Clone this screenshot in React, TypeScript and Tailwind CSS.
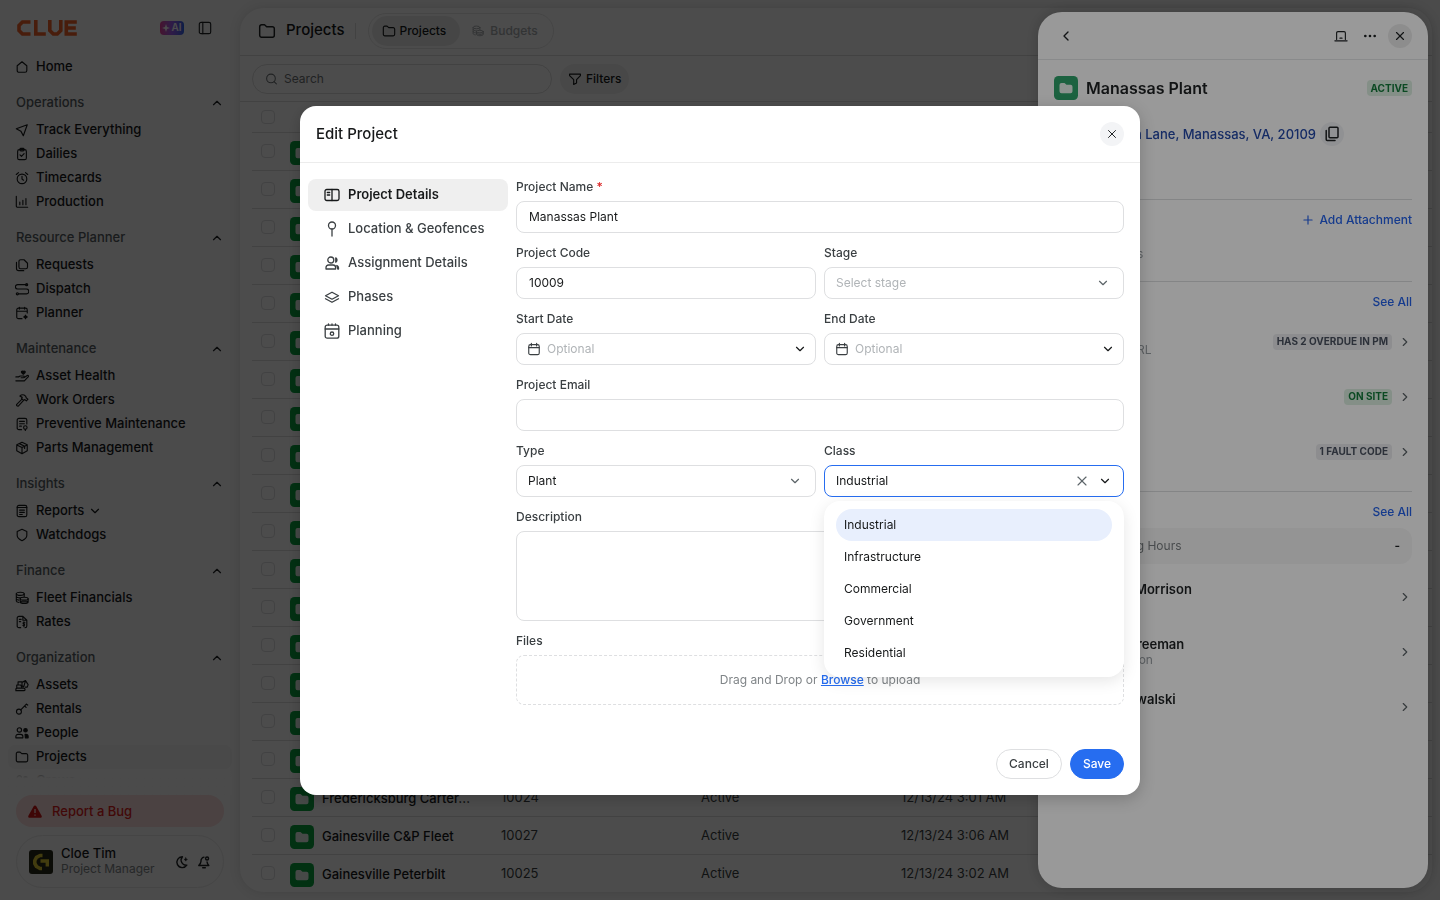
import React from 'react';
import { ChevronDown, ChevronLeft, ChevronRight, ChevronUp, Ellipsis, Plus, Search, X } from 'lucide-react';

const ICONS: Record<string, React.ReactNode> = {
    home: <path d="M2.5 6.6 8 2l5.500 4.600V12a2 2 0 0 1-2 2h-7a2 2 0 0 1-2-2z" />,
    send: <path d="M14 2 1.500 6.500l5.200 2.800L9.500 14.500z" />,
    clipboard: <><rect x="3" y="3" width="10" height="11.500" rx="2" /><rect x="5.700" y="1.500" width="4.600" height="3" rx="1" /><path d="m5.700 9 1.700 1.700 3-3.200" /></>,
    alarm: <><circle cx="8" cy="9" r="5.500" /><path d="M8 6v3.200l1.800 1.300M1.500 4 4 1.800M14.500 4 12 1.800" /></>,
    chart: <path d="M1.500 1.500v11a1.500 1.500 0 0 0 1.500 1.500h11.500M5.500 8v3M9 6v5M12.500 4v7" />,
    files: <><path d="M6.500 2h3.800L14.300 6v4.300a2 2 0 0 1-2 2H6.500a2 2 0 0 1-2-2V4a2 2 0 0 1 2-2z" /><path d="M1.700 5v7a2.500 2.500 0 0 0 2.500 2.500H10" /></>,
    route: <><path d="M3.500 3H13M3 3a2.500 2.500 0 0 0 0 5h10a2.500 2.500 0 0 1 0 5.500H4" /><circle cx="13.300" cy="3" r="1.200" /><circle cx="2.700" cy="13.500" r="1.200" /></>,
    planner: <><path d="M8 14.500H4a2 2 0 0 1-2-2V4.500a2 2 0 0 1 2-2h8a2 2 0 0 1 2 2V8M2 6h12M5 1.500v2M11 1.500v2" /><path d="m12 10.500.7 1.300 1.300.7-1.300.7-.7 1.300-.7-1.300-1.300-.7 1.300-.7z" fill="currentColor" /></>,
    health: <><path d="M1 9h3l2-1h3.500c1.500 0 1.500 2 0 2H7M10.500 9.700 14 7.500c1.300-.5 2 .7 1 1.600l-4.300 4.400H1" /><path d="M9.500 6 7.500 4c-.8-1.300 1.200-2.300 2-1 .8-1.300 2.800-.3 2 1z" fill="currentColor" /></>,
    hammer: <path d="m8 7-6 6c-.8 1.200 1 2.700 2 1.600L9.800 8.500M5.500 3.500C7.500 1.500 10 1.500 12 3.500l1 2.300 1.800 1.200-1.800 2-2-1.500-1.200 1L7.500 6.200l.8-1.200z" />,
    report: <><rect x="2.500" y="1.500" width="11" height="13" rx="2" /><path d="M2.500 4h11M5.300 7h5.400M5.300 9.500h5.400M5.300 12h3" /></>,
    maintenance: <><path d="M7.500 14.500h-3a2 2 0 0 1-2-2v-9a2 2 0 0 1 2-2h7a2 2 0 0 1 2 2V8M5.300 5h5.400M5.300 7.700h5.400M5.300 10.500h2" /><circle cx="11.800" cy="12" r="2" /><path d="M11.800 14v1.500" /></>,
    box: <path d="m8 1.500 6 2.700v7L8 14.500l-6-3.300v-7zM2 4.500l6 3 6-3M8 7.500v7M5 3l6 3v2.500" />,
    shield: <path d="M8 1.500 13.500 4v4.500c0 2.500-2.500 4.500-5.500 6-3-1.500-5.500-3.500-5.500-6V4z" />,
    coins: <><ellipse cx="6" cy="3.200" rx="4.500" ry="1.800" /><path d="M1.500 3.200v8.300c0 .8 1.200 1.400 3 1.700M1.500 6c0 1 2 1.800 4.500 1.800M1.500 8.800c0 .8 1 1.300 3 1.600M10.500 3.200v3" /><ellipse cx="10.500" cy="8.800" rx="4.500" ry="1.700" /><path d="M6 8.800v3.700c0 1 2 1.800 4.500 1.800s4.500-.8 4.500-1.800V8.800M6 11c0 .8 2 1.500 4.500 1.500S15 11.800 15 11" /></>,
    rates: <><path d="M6.500 14.500H4.500a2 2 0 0 1-2-2v-9a2 2 0 0 1 2-2H9L13.500 6v6.500a2 2 0 0 1-2 2M9 1.500V6h4.500M5 5h2M5 7.500h1.500" /><path d="M11.300 8.800c-1.700-.8-3 .7-1.300 1.500s1 2.200-1 1.500M10.200 7.800v5.500" /></>,
    excavator: <path d="M1 14.500h9a1.500 1.500 0 0 0 0-3H2.500a1.500 1.500 0 0 0-1.500 1.500zM2 11.500V8h4.500l1.500 3M3.500 8V4.500H8V9l2 1 2-7 3 4.500-1 3h-2M8 5l4-2" />,
    key: <><circle cx="4.500" cy="11" r="2.800" /><path d="m6.600 9 6.400-6.500M11 4.500l1.700 1.700M13 2.500l1.500 1" /></>,
    people: <><circle cx="5" cy="4.500" r="2.500" /><path d="M1 13.500v-1.500a2.500 2.500 0 0 1 2.500-2.500h3A2.500 2.500 0 0 1 9 12v1.500z" /><circle cx="12" cy="4.800" r="2" fill="currentColor" /><path d="M11.500 9.500h1A2.500 2.500 0 0 1 15 12v1.500h-3.200z" fill="currentColor" /></>,
    folder: <path d="M1.500 4.200a1.700 1.700 0 0 1 1.700-1.700h2.600l1.900 1.700h5.100a1.700 1.700 0 0 1 1.700 1.700v5.900a1.700 1.700 0 0 1-1.700 1.700H3.200a1.700 1.700 0 0 1-1.700-1.700z" />,
    panel: <><rect x="1.500" y="1.500" width="13" height="13" rx="2" /><path d="M5.500 1.500v13" /></>,
    funnel: <path d="M1.800 2.500h12.400v1.600L9.800 8.700v4L6.500 14.300V8.700L1.800 4.100z" />,
    details: <><rect x="1" y="2.500" width="14" height="11" rx="1.800" /><path d="M8 2.500v11M3.300 5.500h2.400M3.300 8h2.400" /></>,
    pin: <><circle cx="8" cy="4.500" r="3.500" /><path d="M8 8v7" /></>,
    team: <><circle cx="6.800" cy="5" r="3" /><path d="M2 14v-1.500a2.500 2.500 0 0 1 2.500-2.500h4.600a2.500 2.500 0 0 1 2.500 2.500V14z" /><path d="M11.800 2.800a2.600 2.600 0 0 1 0 4.400zM12.800 10.500a2.500 2.500 0 0 1 1.700 2.300V14h-.7z" fill="currentColor" /></>,
    layers: <><path d="M8 3.200 1.500 6.700 8 10.200l6.500-3.500z" /><path d="M1.500 9.800 8 13.300l6.500-3.500" /></>,
    calendar: <><rect x="2" y="3" width="12" height="11.500" rx="2" /><path d="M2 6.500h12M5 1.500v3M11 1.500v3" /></>,
    planning: <><rect x="1.200" y="2.200" width="13.600" height="13" rx="2" /><path d="M1.200 6h13.600M4.500 1v1.200M8 1v1.200M11.500 1v1.200" /><circle cx="8" cy="10.700" r="1.700" /></>,
    laptop: <path d="M3 12V4.500A1.500 1.500 0 0 1 4.500 3h7A1.500 1.500 0 0 1 13 4.500V12M1 13.500h14M6.800 10.500h2.400" />,
    copy: <><rect x="5" y="1.200" width="9" height="10.500" rx="1" /><path d="M2.200 4.500v9a1 1 0 0 0 1 1H11" /></>,
    moon: <><path d="M8.500 2a6.200 6.200 0 1 0 5 9.600A5.800 5.800 0 0 1 8.500 2z" /><path d="m12.300 3.200.6 1.300 1.300.6-1.300.6-.6 1.300-.6-1.300-1.300-.6 1.300-.6z" fill="currentColor" strokeWidth="0.600" /></>,
    bell: <><path d="M8 2.500C5.500 3 4.500 5 4.500 7.500c0 2-1 3-2.500 4.500h11.500c-1-1-1.800-2-2-4M6.500 14.500h3" /><circle cx="11.500" cy="4" r="1.700" /></>,
};

interface IconProps {
    name: string;
    className?: string;
    weight?: number;
}

const Icon: React.FC<IconProps> = ({ name, className = 'size-3.5', weight = 1.3 }) => (
    <svg
        viewBox="0 0 16 16"
        fill="none"
        stroke="currentColor"
        strokeWidth={weight}
        strokeLinecap="round"
        strokeLinejoin="round"
        className={`shrink-0 ${className}`}
        aria-hidden="true"
    >
        {ICONS[name]}
    </svg>
);

const sections = [
    { title: 'Operations', items: [['send', 'Track Everything'], ['clipboard', 'Dailies'], ['alarm', 'Timecards'], ['chart', 'Production']] },
    { title: 'Resource Planner', items: [['files', 'Requests'], ['route', 'Dispatch'], ['planner', 'Planner']] },
    { title: 'Maintenance', items: [['health', 'Asset Health'], ['hammer', 'Work Orders'], ['maintenance', 'Preventive Maintenance'], ['box', 'Parts Management']] },
    { title: 'Insights', items: [['report', 'Reports'], ['shield', 'Watchdogs']] },
    { title: 'Finance', items: [['coins', 'Fleet Financials'], ['rates', 'Rates']] },
    { title: 'Organization', items: [['excavator', 'Assets'], ['key', 'Rentals'], ['people', 'People'], ['folder', 'Projects'], ['people', 'Crews']] },
];

const NavItem = ({ icon, label }: { icon: string; label: string }) => (
    <a
        href="#"
        className={`flex h-6 items-center gap-2 rounded-lg px-2 text-[13px] font-medium text-[#17191a] ${label === 'Projects' ? 'bg-[#f3f3f3]' : ''}`}
    >
        <Icon name={icon} className="-ml-px size-3.5" />
        <span className="-ml-px">{label}</span>
        {label === 'Reports' && <ChevronDown size={14} className="-ml-1" />}
    </a>
);

const Sidebar = () => (
    <aside className="flex w-60 shrink-0 flex-col px-2 pb-3">
        <div className="flex h-[55px] shrink-0 items-center px-2">
            <svg viewBox="0 0 60 16" className="ml-px h-4 w-[60px]" fill="none" stroke="#f2622a" strokeWidth="3.600" role="img" aria-label="CLUE">
                <path d="M13.500 2H5.500L2 5.500v5L5.500 14h8M18.800 0v14h10M32.800 0v10.500l3.500 3.500h4l3.500-3.500V0M59.800 2H49.300v12h10.500M49.300 8h9.500" />
            </svg>
            <button type="button" className="mr-3.5 ml-auto flex h-3.5 w-6 items-center justify-center rounded bg-linear-to-r from-[#e83e9c] via-[#9a5bf0] to-[#2563eb] text-[10px] font-semibold text-white">
                <svg viewBox="0 0 8 8" className="mr-px size-2" fill="currentColor" aria-hidden="true"><path d="m4 0 1 3 3 1-3 1-1 3-1-3-3-1 3-1z" /></svg>
                AI
            </button>
            <button type="button" aria-label="Collapse sidebar" className="mr-3">
                <Icon name="panel" className="size-3.5" />
            </button>
        </div>
        <nav className="h-0 min-h-0 grow overflow-hidden">
            <NavItem icon="home" label="Home" />
            {sections.map((section) => (
                <div key={section.title}>
                    <button type="button" className="mt-3 mb-[3px] flex h-6 w-full items-center justify-between px-2 text-[13px] font-medium text-[#555d61]">
                        {section.title}
                        <ChevronUp size={14} className="text-[#1f2224]" />
                    </button>
                    {section.items.map(([icon, label]) => (
                        <NavItem key={label} icon={icon} label={label} />
                    ))}
                </div>
            ))}
        </nav>
        <div className="z-0 -mt-3 h-7 shrink-0 bg-linear-to-t from-[#fafafa] from-60% to-transparent" />
        <div className="flex shrink-0 flex-col gap-2 px-2">
            <button type="button" className="flex h-8 items-center gap-2.5 rounded-full bg-[#fbdcdc] px-3 pt-px text-[13px] font-medium text-[#dc1c1c]">
                <svg viewBox="0 0 14 13" className="h-[13px] w-3.5" aria-hidden="true">
                    <path d="M7 .5c.6 0 1 .3 1.300.8l5.300 9.400c.6 1-.1 2-1.200 2H1.600c-1.100 0-1.800-1-1.200-2L5.700 1.300C6 .8 6.400.5 7 .5z" fill="#d01616" />
                    <path d="M7 4v4M7 9.500v1.200" stroke="#fbdcdc" strokeWidth="1.300" />
                </svg>
                Report a Bug
            </button>
            <div className="flex h-[53px] items-center rounded-full border border-[#e8e8e8] px-3">
                <svg viewBox="0 0 24 24" className="size-6" role="img" aria-label="Company logo">
                    <rect width="24" height="24" rx="3" fill="#26281a" />
                    <path d="M13.500 5.500H11L7.500 7.300 5.800 10.500v3l1.700 3L11 18.500h2" fill="none" stroke="#dcc832" strokeWidth="3.600" strokeLinejoin="round" />
                    <path d="M11.500 11h6.800v5.500" fill="none" stroke="#dcc832" strokeWidth="3.400" />
                </svg>
                <div className="ml-2 flex flex-col pb-0.5">
                    <span className="text-[13px] leading-4 font-medium text-[#17191a]">Cloe Tim</span>
                    <span className="text-xs leading-4 text-[#808588]">Project Manager</span>
                </div>
                <button type="button" aria-label="Dark mode" className="ml-auto"><Icon name="moon" weight={1.6} /></button>
                <button type="button" aria-label="Notifications" className="ml-2"><Icon name="bell" weight={1.6} /></button>
            </div>
        </div>
    </aside>
);

const FolderBadge = ({ fill = '#08a33f' }: { fill?: string }) => (
    <svg viewBox="0 0 24 24" className="size-6 shrink-0" aria-hidden="true">
        <rect width="24" height="24" rx="4.500" fill={fill} />
        <path d="M5.500 9a2 2 0 0 1 2-2h3l2 1.700h4a2 2 0 0 1 2 2v4.600a2 2 0 0 1-2 2h-9a2 2 0 0 1-2-2z" fill="#e9f5ee" />
    </svg>
);

const projects = [
    ...Array.from({ length: 17 }, (_, i) => ['Culpeper Yard', String(10005 + i), '12/13/24 3:00 AM']),
    ['Fredericksburg Carter…', '10024', '12/13/24 3:01 AM'],
    ['Gainesville C&P Fleet', '10027', '12/13/24 3:06 AM'],
    ['Gainesville Peterbilt', '10025', '12/13/24 3:02 AM'],
];

const Checkbox = ({ label }: { label: string }) => (
    <input type="checkbox" aria-label={label} className="ml-[9px] block size-3.5 appearance-none rounded border border-[#dcdee0]" />
);

const ProjectsPage = () => (
    <main className="my-2 mr-2 flex min-w-0 grow flex-col overflow-hidden rounded-3xl bg-white shadow-[0_0_12px_rgba(0,0,0,0.12)]">
        <header className="flex h-12 shrink-0 items-center border-b border-[#dcdcdc] px-[18px] pb-0.5">
            <Icon name="folder" className="size-[18px]" />
            <h1 className="ml-2.5 text-[15px] font-medium text-[#17191a]">Projects</h1>
            <div className="ml-2.5 h-4 w-px bg-[#dcdcdc]" />
            <div className="ml-3 flex h-9 items-center rounded-full border border-[#e6e6e6] px-[3px]">
                <button type="button" className="flex h-[30px] items-center gap-1 rounded-full bg-[#ececec] pr-3.5 pl-2.5 text-xs font-medium text-[#17191a]">
                    <Icon name="folder" /> Projects
                </button>
                <button type="button" className="flex h-[30px] items-center gap-1.5 rounded-full px-3 text-xs font-medium text-[#a9adb0]">
                    <Icon name="coins" className="size-3" /> Budgets
                </button>
            </div>
        </header>
        <div className="flex h-[46px] shrink-0 items-center gap-2 border-b border-[#dcdcdc] px-3">
            <label className="flex h-[30px] w-[300px] items-center gap-1.5 rounded-full border border-[#dcdcdc] px-3 text-[#6e7376]">
                <Search size={14} />
                <input type="search" placeholder="Search" aria-label="Search" className="w-full min-w-0 bg-transparent pt-px text-xs outline-none placeholder:text-[#6e7376]" />
            </label>
            <button type="button" className="flex h-[30px] items-center gap-1 rounded-full bg-[#f1f1f1] px-2 text-xs font-medium text-[#17191a]">
                <Icon name="funnel" /> Filters
            </button>
        </div>
        <div className="min-h-0 grow overflow-hidden pl-3">
            <table className="w-full table-fixed border-collapse text-left text-[13px] text-[#3a3f42]">
                <thead>
                    <tr className="h-[30px] border-b border-[#dcdcdc]">
                        <th className="w-[38px]"><Checkbox label="Select all projects" /></th>
                        <th className="w-[211px]" />
                        <th className="w-[200px]" />
                        <th className="w-[200px]" />
                        <th />
                    </tr>
                </thead>
                <tbody>
                    {projects.map(([name, code, date]) => (
                        <tr key={code} className="h-[38px] border-b border-[#dcdcdc]">
                            <td><Checkbox label={name} /></td>
                            <td>
                                <div className="flex items-center gap-2 pt-1 font-medium text-[#17191a]"><FolderBadge />{name}</div>
                            </td>
                            <td className="pt-0.5">{code}</td>
                            <td className="pt-0.5">Active</td>
                            <td className="pt-0.5">{date}</td>
                        </tr>
                    ))}
                </tbody>
            </table>
        </div>
    </main>
);

const Badge = ({ children, green = false }: { children: React.ReactNode; green?: boolean }) => (
    <span className={`flex h-4 items-center rounded px-1 text-[10px] font-bold ${green ? 'bg-[#dcefe2] text-[#137a3a]' : 'bg-[#ebecee] text-[#4a5160]'}`}>
        {children}
    </span>
);

const assets = [
    { name: 'Dozer', sub: 'Case 6 RL', badge: 'HAS 2 OVERDUE IN PM', green: false },
    { name: 'Truck', sub: 'Deere', badge: 'ON SITE', green: true },
    { name: 'Crane', sub: 'Terex', badge: '1 FAULT CODE', green: false },
];

const crew = [
    { name: 'Aaron Morrison', sub: '' },
    { name: 'Dana Freeman', sub: 'Inspection' },
    { name: 'Jay Kowalski', sub: '' },
];

const Drawer = () => (
    <aside className="fixed top-3 right-3 bottom-3 z-20 w-[390px] overflow-hidden rounded-3xl bg-white shadow-[0_0_16px_rgba(0,0,0,0.2)]">
        <header className="flex h-12 items-center border-b border-[#e4e6e8] px-4">
            <button type="button" aria-label="Back" className="flex size-6 items-center justify-center"><ChevronLeft size={16} /></button>
            <button type="button" aria-label="Open on desktop" className="ml-auto"><Icon name="laptop" /></button>
            <button type="button" aria-label="More" className="mr-2.5 ml-3.5"><Ellipsis size={16} /></button>
            <button type="button" aria-label="Close panel" className="flex size-6 items-center justify-center rounded-full bg-[#ececec]"><X size={14} /></button>
        </header>
        <div className="px-4">
            <div className="flex h-14 items-center">
                <FolderBadge fill="#30a46c" />
                <h2 className="ml-2 text-base font-semibold text-[#1f2224]">Manassas Plant</h2>
                <div className="ml-auto"><Badge green>ACTIVE</Badge></div>
            </div>
            <div className="flex h-[84px] items-start gap-1 border-b border-[#dcdee0] pt-1.5">
                <a href="#" className="w-[262px] overflow-hidden text-right text-[13px] leading-6 font-medium whitespace-nowrap text-[#2449a8]">92 Glen Lane, Manassas, VA, 20109</a>
                <button type="button" aria-label="Copy address" className="flex size-6 items-center justify-center rounded-full bg-[#f1f2f5]"><Icon name="copy" className="size-4" weight={1.5} /></button>
            </div>
            <div className="flex h-[82px] flex-col border-b border-[#dcdee0] pt-2">
                <button type="button" className="flex h-6 items-center gap-1 self-end text-xs font-medium text-[#2563eb]"><Plus size={14} />Add Attachment</button>
                <p className="mt-3 text-xs leading-5 text-[#9aa0a5]">No attachments</p>
            </div>
            <div className="flex h-[210px] flex-col border-b border-[#dcdee0] pt-2">
                <a href="#" className="h-6 self-end text-xs leading-6 font-medium text-[#2563eb]">See All</a>
                {assets.map((asset) => (
                    <div key={asset.name} className="flex h-[55px] items-center">
                        <div className="ml-10 text-xs leading-4 text-[#9aa0a5]">
                            <p className="text-[13px] font-medium text-[#1f2224]">{asset.name}</p>
                            <p>{asset.sub}</p>
                        </div>
                        <div className="mr-1.5 ml-auto"><Badge green={asset.green}>{asset.badge}</Badge></div>
                        <ChevronRight size={14} className="text-[#5c6468]" />
                    </div>
                ))}
            </div>
            <div className="flex flex-col pt-2">
                <a href="#" className="h-6 self-end text-xs leading-6 font-medium text-[#2563eb]">See All</a>
                <div className="mt-1 mb-1.5 flex h-9 items-center justify-between rounded-xl bg-[#f7f7f7] px-3 text-xs text-[#7a7f82]">
                    <span>Total Working Hours</span>
                    <span className="font-semibold text-[#1f2224]">-</span>
                </div>
                {crew.map((person) => (
                    <div key={person.name} className="flex h-[55px] items-center pb-px">
                        <div className="ml-10 h-8 text-xs leading-4 text-[#9aa0a5]">
                            <p className="text-[13px] leading-4 font-semibold text-[#1f2224]">{person.name}</p>
                            <p>{person.sub}</p>
                        </div>
                        <ChevronRight size={14} className="ml-auto text-[#5c6468]" />
                    </div>
                ))}
            </div>
        </div>
    </aside>
);

const tabs = [
    ['details', 'Project Details'],
    ['pin', 'Location & Geofences'],
    ['team', 'Assignment Details'],
    ['layers', 'Phases'],
    ['planning', 'Planning'],
];

const classes = ['Industrial', 'Infrastructure', 'Commercial', 'Government', 'Residential'];

const Label = ({ id, children }: { id: string; children: React.ReactNode }) => (
    <label htmlFor={id} className="text-xs leading-4 font-medium text-[#3a3f42]">{children}</label>
);

interface FieldProps {
    id: string;
    label: string;
    value?: string;
    required?: boolean;
}

const TextField: React.FC<FieldProps> = ({ id, label, value = '', required }) => (
    <div className="flex flex-col gap-1.5">
        <Label id={id}>{label}{required && <span className="text-[#dc2626]"> *</span>}</Label>
        <input id={id} type="text" defaultValue={value} className="h-8 w-full rounded-lg border border-[#dedfe1] px-3 pb-px text-xs text-[#17191a] outline-none" />
    </div>
);

const DateField: React.FC<FieldProps> = ({ id, label }) => (
    <div className="flex flex-col gap-1.5">
        <Label id={id}>{label}</Label>
        <div className="flex h-8 items-center rounded-lg border border-[#dedfe1] px-2.5 text-[#3a3f42]">
            <Icon name="calendar" />
            <input id={id} type="text" placeholder="Optional" className="ml-1.5 min-w-0 grow bg-transparent text-xs outline-none placeholder:text-[#b0b4b7]" />
            <ChevronDown size={14} className="-mr-0.5 text-[#17191a]" />
        </div>
    </div>
);

const SelectField: React.FC<FieldProps> = ({ id, label, value = '' }) => (
    <div className="flex flex-col gap-1.5">
        <Label id={id}>{label}</Label>
        <div className="flex h-8 items-center rounded-lg border border-[#dedfe1] pr-[13px] pl-[11px] text-[#5c6468]">
            <select id={id} className={`grow appearance-none bg-transparent text-xs outline-none ${value ? 'text-[#17191a]' : 'text-[#b0b4b7]'}`}>
                <option>{value || 'Select stage'}</option>
            </select>
            <ChevronDown size={14} />
        </div>
    </div>
);

const EditProjectModal = () => (
    <div className="fixed inset-0 z-30 flex items-center justify-center bg-black/40 pt-px">
        <div role="dialog" aria-labelledby="modal-title" className="w-[840px] rounded-2xl bg-white shadow-[0_4px_16px_rgba(0,0,0,0.2)]">
            <header className="flex h-[57px] items-center justify-between border-b border-[#ececec] px-4">
                <h2 id="modal-title" className="text-[15px] font-medium text-[#17191a]">Edit Project</h2>
                <button type="button" aria-label="Close" className="flex size-6 items-center justify-center rounded-full bg-[#f3f4f6] text-[#1f2224]"><X size={14} strokeWidth={1.7} /></button>
            </header>
            <div className="flex gap-2 py-4 pr-4 pl-2">
                <nav className="flex w-[200px] shrink-0 flex-col gap-0.5">
                    {tabs.map(([icon, label], i) => (
                        <button
                            key={label}
                            type="button"
                            className={`flex h-8 items-center gap-2 rounded-lg px-4 text-[13px] whitespace-nowrap ${i === 0 ? 'bg-[#efefef] font-semibold text-[#17191a]' : 'font-medium text-[#3a3f42]'}`}
                        >
                            <Icon name={icon} className="size-4" />
                            {label}
                        </button>
                    ))}
                </nav>
                <form className="flex min-w-0 grow flex-col gap-3">
                    <TextField id="name" label="Project Name" value="Manassas Plant" required />
                    <div className="grid grid-cols-2 gap-x-2 gap-y-3">
                        <TextField id="code" label="Project Code" value="10009" />
                        <SelectField id="stage" label="Stage" />
                        <DateField id="start" label="Start Date" />
                        <DateField id="end" label="End Date" />
                    </div>
                    <TextField id="email" label="Project Email" />
                    <div className="grid grid-cols-2 gap-2">
                        <SelectField id="type" label="Type" value="Plant" />
                        <div className="relative flex flex-col gap-1.5">
                            <Label id="class">Class</Label>
                            <div className="flex h-8 items-center rounded-lg border border-[#266df0] px-[11px] text-[#5c6468]">
                                <select id="class" className="grow appearance-none bg-transparent text-xs text-[#17191a] outline-none">
                                    {classes.map((item) => <option key={item}>{item}</option>)}
                                </select>
                                <button type="button" aria-label="Clear class"><X size={16} strokeWidth={1.7} /></button>
                                <ChevronDown size={14} className="ml-2 text-[#17191a]" />
                            </div>
                            <ul role="listbox" aria-label="Class" className="absolute top-full right-0 left-0 z-10 mt-1 rounded-2xl bg-white px-3 py-2 shadow-[0_4px_16px_rgba(0,0,0,0.1)]">
                                {classes.map((item, i) => (
                                    <li key={item} role="option" aria-selected={i === 0} className={`flex h-8 items-center rounded-full px-2 text-xs text-[#17191a] ${i === 0 ? 'bg-[#e8effd]' : ''}`}>
                                        {item}
                                    </li>
                                ))}
                            </ul>
                        </div>
                    </div>
                    <div className="flex flex-col gap-1.5">
                        <Label id="description">Description</Label>
                        <textarea id="description" className="block h-[90px] w-full resize-none rounded-lg border border-[#dedfe1] p-3 text-xs outline-none" />
                    </div>
                    <div className="flex flex-col gap-1.5">
                        <span className="text-xs leading-4 font-medium text-[#3a3f42]">Files</span>
                        <div className="flex h-[50px] items-center justify-center rounded-lg border border-dashed border-[#dedfe1] text-xs text-[#808588]">
                            <p>Drag and Drop or <a href="#" className="font-medium text-[#266df0] underline">Browse</a> to upload</p>
                        </div>
                    </div>
                </form>
            </div>
            <footer className="flex justify-end gap-2 px-4 pt-7 pb-4 text-xs font-medium">
                <button type="button" className="h-[30px] rounded-full border border-[#dedfe1] px-3 text-[#3a3f42]">Cancel</button>
                <button type="button" className="h-[30px] rounded-full border border-[#266df0] bg-[#266df0] px-3 text-white">Save</button>
            </footer>
        </div>
    </div>
);

export default function App() {
    return (
        <div className="flex h-screen bg-[#fafafa] font-[Inter,sans-serif] text-[#1f2224]">
            <Sidebar />
            <ProjectsPage />
            <div className="fixed inset-0 z-10 bg-black/50" />
            <Drawer />
            <EditProjectModal />
        </div>
    );
}
